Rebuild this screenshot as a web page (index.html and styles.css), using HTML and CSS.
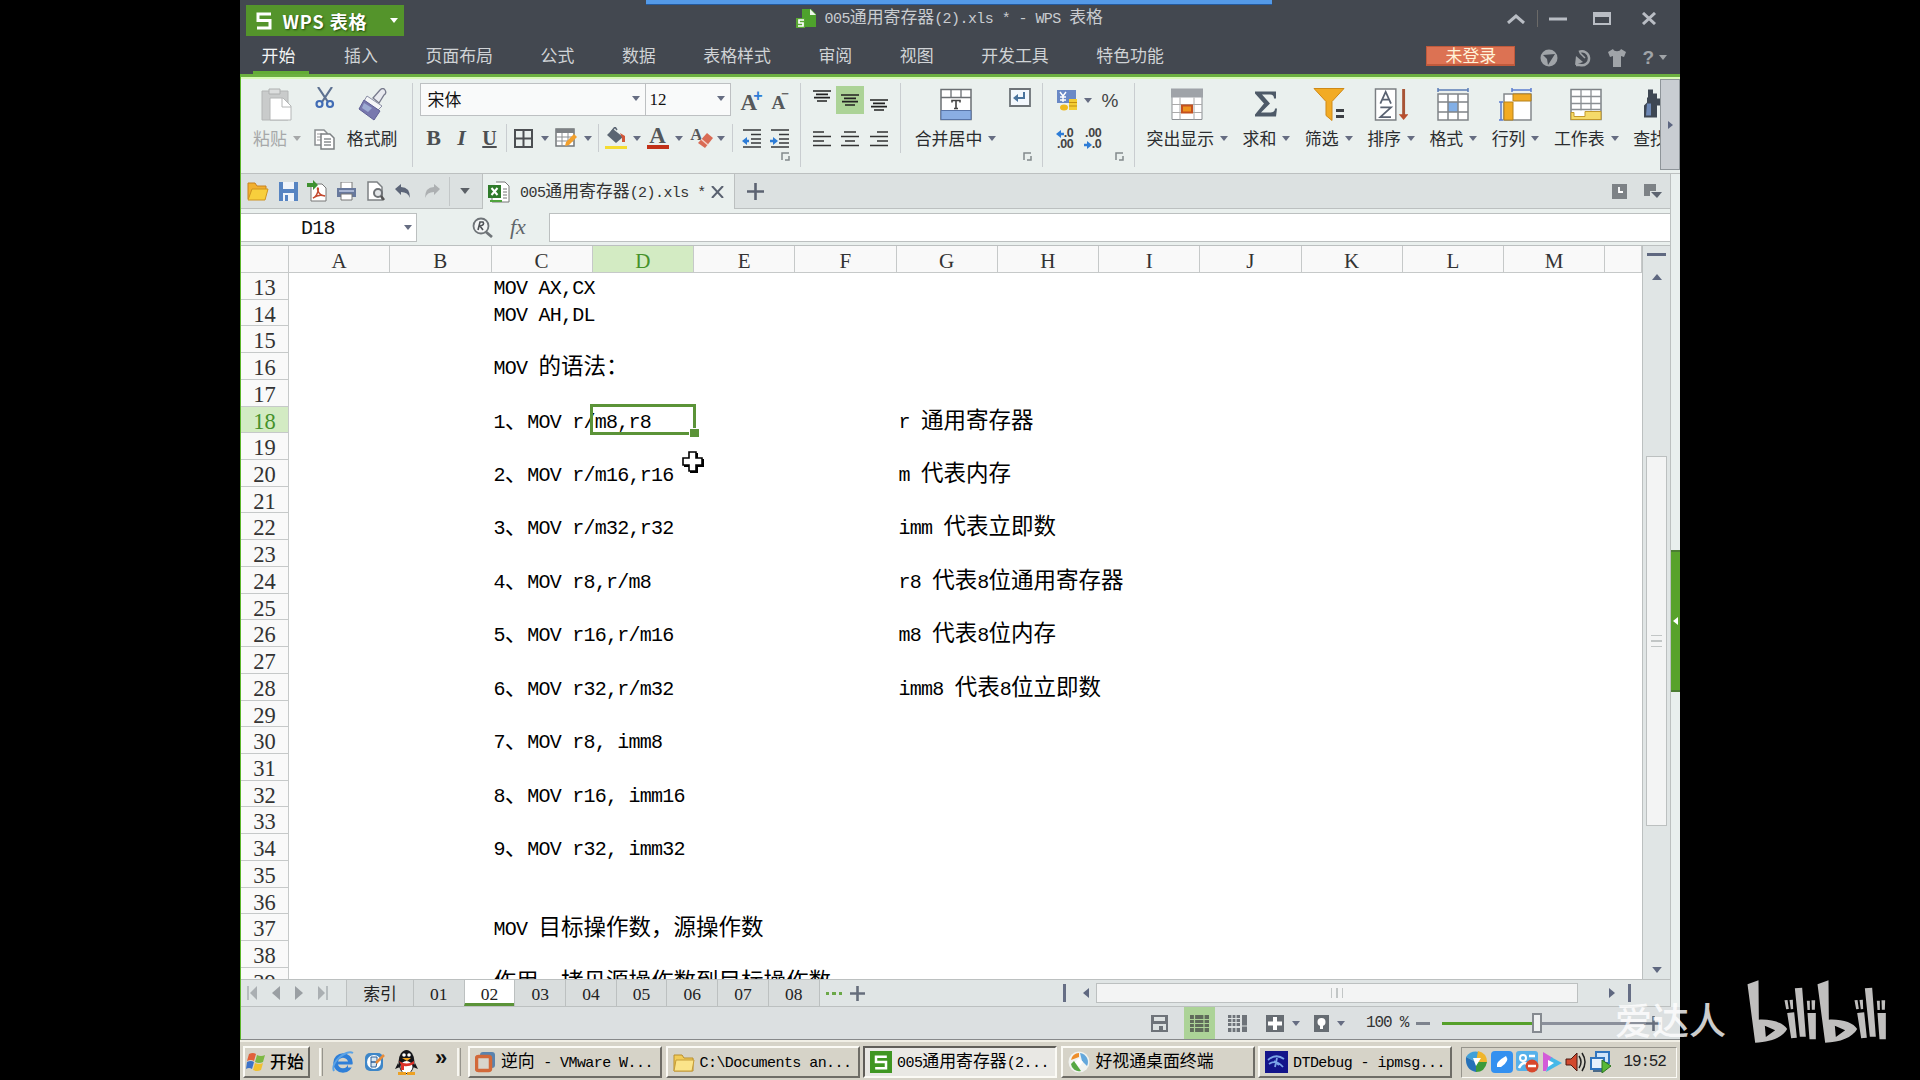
FILE: index.html
```html
<!DOCTYPE html>
<html lang="zh-CN">
<head>
<meta charset="utf-8">
<title>005通用寄存器(2).xls * - WPS 表格</title>
<link rel="stylesheet" href="styles.css">
</head>
<body>
<svg width="0" height="0" class="defs">
  <defs>
    <symbol id="arr" viewBox="0 0 8 5"><path d="M0 0h8L4 5z" fill="currentColor"/></symbol>
    <symbol id="launch" viewBox="0 0 9 9"><path d="M1 8V1h7" fill="none" stroke="#83898c" stroke-width="1.5"/><path d="M4 8h4V4" fill="none" stroke="#83898c" stroke-width="1.5"/></symbol>
    <symbol id="bili" viewBox="430 40 215 195"><path fill-rule="evenodd" d="M437 56 470 44 471 162C512 160 545 172 556 190 542 215 505 230 460 231ZM489 180 520 194 492 214ZM548 104l9-1 4 27-8 1zM563 103l10-1 1 28-7 1zM556 142l21-2 8 76-17 2zM579 68l22-2 11 147-18 0zM615 105h9v28h-7zM629 104h11l-1 28h-9zM617 142h25v79h-19z"/></symbol>
    <symbol id="wps" viewBox="0 0 16 18"><path d="M15 2H2v6.500h12V16H1" fill="none" stroke="currentColor" stroke-width="3"/></symbol>
  </defs>
</svg>
<div class="desktop">
  <div class="window">
    <header class="titlebar">
      <div class="wps-btn"><svg width="16" height="18"><use href="#wps"/></svg><span class="wps-name">WPS 表格</span><svg width="8" height="5"><use href="#arr"/></svg></div>
      <div class="doc-title">
        <svg width="21" height="20" viewBox="0 0 21 20"><path d="M6 0h9l5 5v13H6z" fill="#4ea22c"/><path d="M14 0l6 6h-6z" fill="#eef6ea"/><path d="M0 9h9v10H0z" fill="#5aa834"/><path d="M8 11H3v3h4v3H2" fill="none" stroke="#fff" stroke-width="1.700"/></svg>
        <span class="t">005<i>通用寄存器</i>(2).xls * - WPS <i>表格</i></span>
      </div>
      <div class="win-ctl">
        <svg width="18" height="10" viewBox="0 0 18 10"><path d="M1 9l8-7 8 7" fill="none" stroke="#b9bdc4" stroke-width="3"/></svg>
        <span class="vline"></span>
        <svg width="18" height="18" viewBox="0 0 18 18"><path d="M0 9h18" stroke="#b9bdc4" stroke-width="3"/></svg>
        <svg width="18" height="13" viewBox="0 0 18 13"><path d="M1 1h16v11H1zM1 4h16" fill="none" stroke="#b9bdc4" stroke-width="2"/><path d="M1 2h16" stroke="#b9bdc4" stroke-width="3"/></svg>
        <svg width="16" height="13" viewBox="0 0 16 13"><path d="M2 1l12 11M14 1L2 12" stroke="#b9bdc4" stroke-width="3"/></svg>
      </div>
    </header>
    <nav class="menu">
      <span class="tab active">开始</span><span class="tab">插入</span><span class="tab">页面布局</span><span class="tab">公式</span><span class="tab">数据</span><span class="tab">表格样式</span><span class="tab">审阅</span><span class="tab">视图</span><span class="tab">开发工具</span><span class="tab">特色功能</span>
      <div class="menu-right">
        <span class="login">未登录</span>
        <svg width="18" height="18" viewBox="0 0 18 18"><circle cx="9" cy="9" r="8.500" fill="#a0a4a8"/><path d="M3 6l12-1-7 11-1-6z" fill="#434850"/></svg>
        <svg width="18" height="18" viewBox="0 0 18 18"><path d="M5 3a7 7 0 1 1 1 13H2" fill="none" stroke="#a0a4a8" stroke-width="2.500"/><path d="M1 16l1-9 7 6z" fill="#a0a4a8"/><path d="M6 4l5 5" stroke="#a0a4a8" stroke-width="1.500"/></svg>
        <svg width="18" height="18" viewBox="0 0 18 18"><path d="M0 3l5-3c1 3 7 3 8 0l5 3-2 5-3-1v11H5V7L2 8z" fill="#a0a4a8"/></svg>
        <span class="help">?<svg width="8" height="5"><use href="#arr"/></svg></span>
      </div>
    </nav>

    <section class="ribbon">
      <div class="group clip">
        <div class="big paste"><svg width="31" height="33" viewBox="0 0 31 33"><path d="M1 3h26v29H1z" fill="#c9cbcb" stroke="#b4b6b6"/><path d="M8 1h11v5H8z" fill="#dcdede" stroke="#aeb0b0"/><path d="M9 10h13l8 8v14H9z" fill="#fff" stroke="#b4b6b6"/><path d="M21 10v9h9" fill="none" stroke="#b4b6b6"/></svg><span class="lbl">粘贴<svg width="8" height="5"><use href="#arr"/></svg></span></div>
        <div class="stack">
          <svg width="20" height="22" viewBox="0 0 20 22"><path d="M3 0l10 15M17 0L7 15" stroke="#5d7191" stroke-width="2.200"/><circle cx="4.500" cy="17" r="3" fill="none" stroke="#416cb5" stroke-width="2.200"/><circle cx="15" cy="17" r="3" fill="none" stroke="#416cb5" stroke-width="2.200"/></svg>
          <svg width="22" height="21" viewBox="0 0 22 21"><path d="M1 1h9l3 3v12H1z" fill="#fff" stroke="#8a8e91" stroke-width="1.500"/><path d="M3 5h5M3 8h4M3 11h4" stroke="#999"/><path d="M7 5h9l4 4v11H7z" fill="#fff" stroke="#7c8083" stroke-width="1.500"/><path d="M10 10h7M10 13h7M10 16h7" stroke="#8a8e91" stroke-width="1.300"/></svg>
        </div>
        <div class="big"><svg width="29" height="33" viewBox="0 0 29 33"><path d="M22 2q3-3 5 0t-1 5l-5 8-6-5z" fill="#e8eaef" stroke="#777a8c" stroke-width="1.300"/><path d="M9 8l15 10-4 4L6 13z" fill="#f5f6f8" stroke="#8b8fa5"/><path d="M6 12l16 11-6 9L1 21z" fill="#7878ae" stroke="#5f5f95"/><path d="M6 15l8 5-4 4-6-4z" fill="#9dabd3"/></svg><span class="lbl">格式刷</span></div>
      </div>
      <div class="group font">
        <div class="fontrow">
          <div class="box name">宋体<svg width="8" height="5"><use href="#arr"/></svg></div>
          <div class="box size"><span class="t">12</span><svg width="8" height="5"><use href="#arr"/></svg></div>
          <span class="sizer">A<sup class="plus">+</sup></span><span class="sizer small">A<sup>−</sup></span>
        </div>
        <div class="fmtrow">
          <b class="ser">B</b><b class="ser it">I</b><b class="ser un">U</b><span class="vs"></span>
          <svg width="19" height="19" viewBox="0 0 19 19"><path d="M1 1h17v17H1zM9.500 1v17M1 9.500h17" fill="none" stroke="#4c4f52" stroke-width="2"/></svg>
          <svg class="ar" width="8" height="5"><use href="#arr"/></svg>
          <svg width="22" height="20" viewBox="0 0 22 20"><path d="M1 1h18v17H1z" fill="#fff" stroke="#73777a" stroke-width="1.500"/><path d="M1 3h18" stroke="#7d8185" stroke-width="4"/><path d="M1 9h18M1 13h18M7 5v13M13 5v13" stroke="#8b8f92"/><path d="M10 18l1-4 8-8 3 3-8 8z" fill="#f2a02c"/></svg>
          <svg class="ar" width="8" height="5"><use href="#arr"/></svg><span class="vs"></span>
          <svg width="22" height="22" viewBox="0 0 22 22"><path d="M8 2l10 8-7 6-9-8z" fill="#5b6673"/><path d="M6 5l4-5 2 3" fill="none" stroke="#5b6673" stroke-width="1.500"/><path d="M15 6l5 3v6h-3v-4z" fill="#d15638"/><path d="M0 19h22v3H0z" fill="#f5dc31"/></svg>
          <svg class="ar" width="8" height="5"><use href="#arr"/></svg>
          <span class="acolor">A</span>
          <svg class="ar" width="8" height="5"><use href="#arr"/></svg>
          <span class="erase">A<svg width="16" height="16" viewBox="0 0 16 16"><path d="M10 0l6 5-8 10-7-5z" fill="#d96b55"/><path d="M4 6l7 6" stroke="#f3cfc5" stroke-width="1.500"/></svg></span>
          <svg class="ar" width="8" height="5"><use href="#arr"/></svg><span class="vs"></span>
          <svg width="19" height="19" viewBox="0 0 19 19"><path d="M1 1h18M9 5.500h10M9 10h10M9 14h10M1 18h18" stroke="#37393b" stroke-width="1.600"/><path d="M7 12H3" stroke="#2d7cd6" stroke-width="2.500"/><path d="M5 8v8l-5-4z" fill="#2d7cd6"/></svg>
          <svg width="19" height="19" viewBox="0 0 19 19"><path d="M1 1h18M9 5.500h10M9 10h10M9 14h10M1 18h18" stroke="#37393b" stroke-width="1.600"/><path d="M0 12h4" stroke="#2d7cd6" stroke-width="2.500"/><path d="M3 8v8l5-4z" fill="#2d7cd6"/></svg>
        </div>
        <svg class="la" width="9" height="9"><use href="#launch"/></svg>
      </div>
      <div class="group align">
        <svg class="up" width="18" height="12" viewBox="0 0 18 12"><path d="M0 1h18M3 4.300h12M1 7.600h16M4 11h10" stroke="#222" stroke-width="1.700"/></svg>
        <span class="on"><svg width="18" height="12" viewBox="0 0 18 12"><path d="M0 1h18M3 4.300h12M1 7.600h16M4 11h10" stroke="#222" stroke-width="1.700"/></svg></span>
        <svg class="dn" width="18" height="12" viewBox="0 0 18 12"><path d="M0 1h18M3 4.300h12M1 7.600h16M4 11h10" stroke="#222" stroke-width="1.700"/></svg>
        <svg width="18" height="16" viewBox="0 0 18 16"><path d="M0 1h11M0 5.500h18M0 10h11M0 14.500h18" stroke="#333" stroke-width="1.700"/></svg>
        <svg width="18" height="16" viewBox="0 0 18 16"><path d="M3 1h12M0 5.500h18M4 10h10M0 14.500h18" stroke="#333" stroke-width="1.700"/></svg>
        <svg width="18" height="16" viewBox="0 0 18 16"><path d="M7 1h11M0 5.500h18M7 10h11M0 14.500h18" stroke="#333" stroke-width="1.700"/></svg>
      </div>
      <div class="group merge">
        <div class="big"><svg width="32" height="32" viewBox="0 0 32 32"><path d="M1 1h30v30H1z" fill="#fff" stroke="#6b6f73" stroke-width="1.500"/><path d="M1 9h30M11 1v8M21 1v8" stroke="#6b6f73" stroke-width="1.300"/><path d="M1 22h30v9H1z" fill="#8aaee3" stroke="#5875a8"/><path d="M12 14v-2h8v2M16 12v8M14 20h4" fill="none" stroke="#444" stroke-width="1.600"/></svg><span class="lbl">合并居中<svg width="8" height="5"><use href="#arr"/></svg></span></div>
        <svg class="wrap" width="22" height="20" viewBox="0 0 22 20"><path d="M1 1h20v17H1z" fill="#f3f8fd" stroke="#6e7478" stroke-width="1.800"/><path d="M15 4v6H7" fill="none" stroke="#49739d" stroke-width="2"/><path d="M9 6v8l-5-4z" fill="#49739d"/></svg>
        <svg class="la" width="9" height="9"><use href="#launch"/></svg>
      </div>
      <div class="group num">
        <div class="numtop">
          <svg width="21" height="21" viewBox="0 0 21 21"><path d="M0 0h19v13H0z" fill="#6a89c6"/><path d="M3 2l3 4 3-4M6 6v6M3 7h6M3 10h6" stroke="#fff" fill="none" stroke-width="1.400"/><ellipse cx="7" cy="17.500" rx="4" ry="3" fill="#efb91e"/><path d="M12 9h8v11h-8z" fill="#f4cd34"/><path d="M12 12.500h8M12 16h8" stroke="#c38f10"/></svg>
          <svg class="ar" width="8" height="5"><use href="#arr"/></svg><span class="pct">%</span>
        </div>
        <div class="numbot">
          <span class="dec"><span class="dl"><svg width="8" height="8" viewBox="0 0 8 8"><path d="M4 4h4" stroke="#2d7cd6" stroke-width="2.500"/><path d="M5 0v8L0 4z" fill="#2d7cd6"/></svg>.0</span><span>.00</span></span>
          <span class="dec"><span>.00</span><span class="dl"><svg width="8" height="8" viewBox="0 0 8 8"><path d="M0 4h4" stroke="#2d7cd6" stroke-width="2.500"/><path d="M3 0v8l5-4z" fill="#2d7cd6"/></svg>.0</span></span>
        </div>
        <svg class="la" width="9" height="9"><use href="#launch"/></svg>
      </div>
      <div class="group tools">
        <div class="big"><svg width="32" height="32" viewBox="0 0 32 32"><path d="M1 1h30v30H1z" fill="#fff" stroke="#8b8f93"/><path d="M0 0h32v9H0z" fill="#9fa3a8"/><path d="M1 16h30M1 24h30M9 9v22M23 9v22" stroke="#aaa"/><path d="M11 17h10v7H11z" fill="#ee921f" stroke="#c4501f" stroke-width="2"/></svg><span class="lbl">突出显示<svg width="8" height="5"><use href="#arr"/></svg></span></div>
        <div class="big"><svg width="24" height="32" viewBox="0 0 24 32"><path d="M1 3h21v7h-2q0-4-4-4H8l8 9-9 9h9q5 0 5-4h2l-1 8H1v-2l9-11L1 5z" fill="#4e5a68"/></svg><span class="lbl">求和<svg width="8" height="5"><use href="#arr"/></svg></span></div>
        <div class="big"><svg width="32" height="32" viewBox="0 0 32 32"><path d="M1 0h30L19 13v19l-6-5V13z" fill="#f2ab24" stroke="#cf8916"/><path d="M23 22h8M23 28h8" stroke="#3d4044" stroke-width="3"/></svg><span class="lbl">筛选<svg width="8" height="5"><use href="#arr"/></svg></span></div>
        <div class="big"><svg width="34" height="34" viewBox="0 0 34 34"><path d="M1 1h21v32H1z" fill="#fff" stroke="#7b7f83" stroke-width="1.500"/><path d="M6 16l5.500-12L17 16M8 12h7M6 20h11L6 30h11" fill="none" stroke="#596271" stroke-width="1.800"/><path d="M30 1v27" stroke="#a85436" stroke-width="3"/><path d="M25 27h10l-5 6z" fill="#b94f2e"/></svg><span class="lbl">排序<svg width="8" height="5"><use href="#arr"/></svg></span></div>
        <div class="big"><svg width="32" height="33" viewBox="0 0 32 33"><path d="M1 0v4M31 0v4M1 2h30" stroke="#5b7cb6" stroke-width="1.500"/><path d="M1 6h30v26H1z" fill="#fff" stroke="#808488" stroke-width="1.500"/><path d="M11 14h10v10H11z" fill="#82afe6"/><path d="M1 14h30M1 24h30M11 6v26M21 6v26" stroke="#808488" stroke-width="1.500"/></svg><span class="lbl">格式<svg width="8" height="5"><use href="#arr"/></svg></span></div>
        <div class="big"><svg width="33" height="33" viewBox="0 0 33 33"><path d="M13 0v4M32 0v4M13 2h19M2 14v18M0 14h4M0 32h4" stroke="#5b7cd0" stroke-width="1.500"/><path d="M5 6h27v26H5z" fill="#fff" stroke="#84888c" stroke-width="1.500"/><path d="M14 6h18v7H14zM5 14h9v18H5z" fill="#f2ab24" stroke="#b5811d"/></svg><span class="lbl">行列<svg width="8" height="5"><use href="#arr"/></svg></span></div>
        <div class="big"><svg width="32" height="32" viewBox="0 0 32 32"><path d="M1 1h30v30H1z" fill="#fff" stroke="#7e8286" stroke-width="1.500"/><path d="M1 8h30M1 15h30M1 21h30M11 1v21M21 1v21" stroke="#8b8f93" stroke-width="1.300"/><path d="M1 24h3v4h11v-5h16v8H1z" fill="#f5da69" stroke="#c39a2d"/></svg><span class="lbl">工作表<svg width="8" height="5"><use href="#arr"/></svg></span></div>
        <div class="big find"><svg width="34" height="32" viewBox="0 0 34 32"><path d="M8 1h5v4h4v5h4V5h4V1h5v6l3 2v6l-3 2v12H22V17h-5v12H4V17l3-3V9h1z" fill="#3e4753"/><path d="M7 15h4v12H6z" fill="#6d88b5"/></svg><span class="lbl">查找<svg width="8" height="5"><use href="#arr"/></svg></span></div>
      </div>
      <div class="more"><svg width="5" height="8" viewBox="0 0 5 8"><path d="M0 0v8l5-4z" fill="#5c6580"/></svg></div>
    </section>

    <div class="main">
      <div class="workarea">
        <div class="quickbar">
          <div class="quick">
            <svg width="22" height="19" viewBox="0 0 22 19"><path d="M1 17V1h7l2 3h9v4" fill="#f2b02f" stroke="#c9811f"/><path d="M1 18L5 7h16l-3 11z" fill="#f8cf3c" stroke="#cf9420"/></svg>
            <svg width="19" height="19" viewBox="0 0 19 19"><path d="M0 0h19v19H0z" fill="#5784c2"/><path d="M4 0h11v7H4zM4 11h11v8H4z" fill="#f0f4fa"/><path d="M6 13h3v6H6z" fill="#5784c2"/></svg>
            <svg width="20" height="22" viewBox="0 0 20 22"><path d="M4 4h11l4 4v13H4z" fill="#fff" stroke="#777"/><path d="M6 18c4-1 6-9 5-10s-1 7 7 8c-5-2-8-1-12 2z" fill="none" stroke="#c44a31" stroke-width="1.500"/><path d="M0 3h6V0l5 5-5 5V7H0z" fill="#3f9130"/></svg>
            <svg width="19" height="19" viewBox="0 0 19 19"><path d="M4 0h11v7H4z" fill="#fff" stroke="#777"/><path d="M0 6h19v9H0z" fill="#68799d"/><path d="M2 9h15" stroke="#a9b6d3" stroke-width="2"/><path d="M4 12h11v6H4z" fill="#fff" stroke="#777"/></svg>
            <svg class="preview" width="18" height="20" viewBox="0 0 18 20"><path d="M1 1h9l5 5v13H1z" fill="#fff" stroke="#7d8184" stroke-width="1.500"/><circle cx="11" cy="12" r="4" fill="#e3e6e8" stroke="#6e7276" stroke-width="2"/><path d="M14 15l3 4" stroke="#555" stroke-width="2.500"/></svg>
            <svg width="15" height="14" viewBox="0 0 15 14"><path d="M0 5l6-5v3q9 0 9 11-2-6-9-6v3z" fill="#5c6578"/></svg>
            <svg class="redo" width="15" height="14" viewBox="0 0 15 14"><path d="M15 5L9 0v3Q0 3 0 14q2-6 9-6v3z" fill="#adb0b2"/></svg>
            <span class="qsep"></span>
            <svg width="10" height="6"><use href="#arr"/></svg>
          </div>
          <div class="doctab">
            <svg width="22" height="22" viewBox="0 0 22 22"><path d="M8 1h9l4 4v16H4v-4" fill="#fff" stroke="#777"/><path d="M15 8h4M15 11h4M15 14h4M15 17h4" stroke="#777"/><path d="M0 4h13v13H0z" fill="#2e7a2a"/><path d="M3.500 7l6 7M9.500 7l-6 7" stroke="#fff" stroke-width="2"/><path d="M2 20h12" stroke="#50a33d" stroke-width="2"/></svg>
            <span class="t">005<i>通用寄存器</i>(2).xls *</span>
            <svg width="13" height="12" viewBox="0 0 13 12"><path d="M1 0l11 12M12 0L1 12" stroke="#5a6270" stroke-width="2"/></svg>
          </div>
          <div class="newtab"><svg width="17" height="17" viewBox="0 0 17 17"><path d="M8.500 0v17M0 8.500h17" stroke="#5c6372" stroke-width="2.600"/></svg></div>
          <div class="tabtools">
            <svg width="15" height="15" viewBox="0 0 15 15"><path d="M0 0h15v15H0z" fill="#7d8286"/><path d="M7 3v5h4" fill="none" stroke="#fff" stroke-width="1.800"/></svg>
            <svg width="18" height="15" viewBox="0 0 18 15"><path d="M0 0h12v7H6v5H0z" fill="#7d8286"/><path d="M7 8h11l-5 6z" fill="#5d6470"/></svg>
          </div>
        </div>
        <div class="formula">
          <div class="namebox"><span class="cell">D18</span><svg width="8" height="5"><use href="#arr"/></svg></div>
          <svg class="mag" width="21" height="21" viewBox="0 0 21 21"><circle cx="9" cy="9" r="7.500" fill="#f3f5f5" stroke="#6f7478" stroke-width="1.800"/><path d="M14 15l6 5" stroke="#6f7478" stroke-width="2.800"/><path d="M6 13l2-8h3q2 3-3 4l3 4" fill="none" stroke="#4e5256" stroke-width="1.600"/></svg>
          <span class="fx">fx</span>
          <div class="input"></div>
        </div>
        <div class="sheetwrap">
          <div class="sheet">
            <div class="row head"><b></b><b>A</b><b>B</b><b>C</b><b class="sel">D</b><b>E</b><b>F</b><b>G</b><b>H</b><b>I</b><b>J</b><b>K</b><b>L</b><b>M</b><b></b></div>
            <div class="rows">
              <div class="row"><b>13</b><span class="c">MOV AX,CX</span></div>
              <div class="row"><b>14</b><span class="c">MOV AH,DL</span></div>
              <div class="row"><b>15</b></div>
              <div class="row"><b>16</b><span class="c">MOV <i>的语法：</i></span></div>
              <div class="row"><b>17</b></div>
              <div class="row"><b class="sel">18</b><span class="c">1<i>、</i>MOV r/m8,r8</span><span class="g">r <i>通用寄存器</i></span></div>
              <div class="row"><b>19</b></div>
              <div class="row"><b>20</b><span class="c">2<i>、</i>MOV r/m16,r16</span><span class="g">m <i>代表内存</i></span></div>
              <div class="row"><b>21</b></div>
              <div class="row"><b>22</b><span class="c">3<i>、</i>MOV r/m32,r32</span><span class="g">imm <i>代表立即数</i></span></div>
              <div class="row"><b>23</b></div>
              <div class="row"><b>24</b><span class="c">4<i>、</i>MOV r8,r/m8</span><span class="g">r8 <i>代表</i>8<i>位通用寄存器</i></span></div>
              <div class="row"><b>25</b></div>
              <div class="row"><b>26</b><span class="c">5<i>、</i>MOV r16,r/m16</span><span class="g">m8 <i>代表</i>8<i>位内存</i></span></div>
              <div class="row"><b>27</b></div>
              <div class="row"><b>28</b><span class="c">6<i>、</i>MOV r32,r/m32</span><span class="g">imm8 <i>代表</i>8<i>位立即数</i></span></div>
              <div class="row"><b>29</b></div>
              <div class="row"><b>30</b><span class="c">7<i>、</i>MOV r8, imm8</span></div>
              <div class="row"><b>31</b></div>
              <div class="row"><b>32</b><span class="c">8<i>、</i>MOV r16, imm16</span></div>
              <div class="row"><b>33</b></div>
              <div class="row"><b>34</b><span class="c">9<i>、</i>MOV r32, imm32</span></div>
              <div class="row"><b>35</b></div>
              <div class="row"><b>36</b></div>
              <div class="row"><b>37</b><span class="c">MOV <i>目标操作数，源操作数</i></span></div>
              <div class="row"><b>38</b></div>
              <div class="row"><b>39</b><span class="c"><i>作用，拷贝源操作数到目标操作数</i></span></div>
              <div class="selection"></div>
              <svg class="cursor" width="22" height="22" viewBox="0 0 22 22"><path d="M8 2h8v6h6v8h-6v6H8v-6H2V8h6z" fill="#000"/><path d="M7 1h7v6h6v7h-6v6H7v-6H1V7h6z" fill="#fff" stroke="#000" stroke-width="1.600"/></svg>
            </div>
          </div>
          <div class="vscroll">
            <span class="split"></span>
            <svg width="10" height="6" viewBox="0 0 10 6"><path d="M0 6l5-6 5 6z" fill="#5f6880"/></svg>
            <span class="vthumb"><s></s><s></s><s></s></span>
            <svg class="down" width="10" height="6"><use href="#arr"/></svg>
          </div>
        </div>
        <div class="sheettabs">
          <div class="navs">
            <svg width="11" height="14" viewBox="0 0 11 14"><path d="M1 0v14" stroke="#aaafb2" stroke-width="1.500"/><path d="M10 0v14L3 7z" fill="#aaafb2"/></svg>
            <svg width="8" height="14" viewBox="0 0 8 14"><path d="M8 0v14L0 7z" fill="#9a9fa3"/></svg>
            <svg width="8" height="14" viewBox="0 0 8 14"><path d="M0 0v14l8-7z" fill="#9a9fa3"/></svg>
            <svg width="11" height="14" viewBox="0 0 11 14"><path d="M10 0v14" stroke="#aaafb2" stroke-width="1.500"/><path d="M1 0v14l7-7z" fill="#aaafb2"/></svg>
          </div>
          <span class="st wide"><i>索引</i></span><span class="st">01</span><span class="st cur">02</span><span class="st">03</span><span class="st">04</span><span class="st">05</span><span class="st">06</span><span class="st">07</span><span class="st">08</span>
          <span class="dots"><s></s><s></s><s></s></span>
          <svg width="15" height="15" viewBox="0 0 15 15"><path d="M7.500 0v15M0 7.500h15" stroke="#666e7c" stroke-width="2.600"/></svg>
          <div class="hscroll">
            <span class="bar"></span>
            <svg width="6" height="10" viewBox="0 0 6 10"><path d="M6 0v10L0 5z" fill="#5f6880"/></svg>
            <span class="hthumb"><s></s><s></s><s></s></span>
            <svg width="6" height="10" viewBox="0 0 6 10"><path d="M0 0v10l6-5z" fill="#5f6880"/></svg>
            <span class="bar"></span>
          </div>
        </div>
      </div>
      <div class="side"><div class="sidetab"><svg width="5" height="8" viewBox="0 0 5 8"><path d="M5 0v8L0 4z" fill="#fff"/></svg></div></div>
    </div>

    <footer class="status">
      <svg width="17" height="17" viewBox="0 0 17 17"><path d="M0 0h17v17H0z" fill="#6e7379"/><path d="M3 2h11v4H3zM2 9h13v6h-3v-4H8v4H2z" fill="#dce1e1"/></svg>
      <span class="view on"><svg width="19" height="17" viewBox="0 0 19 17"><path d="M0 0h19v17H0z" fill="#5f6b5a"/><path d="M0 4.500h19M0 8.500h19M0 12.500h19M4.500 0v17M14 0v17" stroke="#acd397" stroke-width="1.200"/></svg></span>
      <svg class="view2" width="19" height="17" viewBox="0 0 19 17"><path d="M0 0h12v11H0zM14 0h5v17h-5zM0 13h12v4H0z" fill="#6e7379"/><path d="M4 0v17M8 0v17M0 3.500h12M0 7.500h12M14 11h5" stroke="#dce1e1" stroke-width="1.200"/></svg>
      <svg class="read" width="18" height="17" viewBox="0 0 18 17"><path d="M0 0h18v17H0z" fill="#676d73"/><path d="M9 2v13M2 8.500h14" stroke="#fff" stroke-width="4"/></svg>
      <svg class="ar" width="8" height="5"><use href="#arr"/></svg>
      <svg class="bulb" width="15" height="17" viewBox="0 0 15 17"><path d="M0 0h15v17H0z" fill="#676d73"/><circle cx="7.500" cy="7" r="4" fill="#fff"/><path d="M6 10h3v4H6z" fill="#fff"/></svg>
      <svg class="ar" width="8" height="5"><use href="#arr"/></svg>
      <span class="t zoomtxt">100 %</span>
      <svg class="zminus" width="14" height="3" viewBox="0 0 14 3"><path d="M0 0h14v3H0z" fill="#7d838d"/></svg>
      <span class="track done"></span><span class="knob"></span><span class="track"></span>
      <svg width="15" height="15" viewBox="0 0 15 15"><path d="M7.500 0v15M0 7.500h15" stroke="#666e7c" stroke-width="2.600"/></svg>
    </footer>
  </div>

  <div class="taskbar">
    <div class="tb start"><svg width="21" height="21" viewBox="0 0 21 21"><path d="M3 3q4-2 7 0L8 10Q5 8 1 10z" fill="#e1603a"/><path d="M11 4q4 2 8 0l-2 7q-4 2-8 0z" fill="#7eb843"/><path d="M1 11q4-2 7 0l-2 7q-3-2-6 0z" fill="#3c72c8"/><path d="M9 12q4 2 8 0l-2 7q-4 2-8 0z" fill="#f0c030"/></svg><span>开始</span></div>
    <span class="grip"></span>
    <div class="launchers">
      <svg width="23" height="23" viewBox="0 0 23 23"><circle cx="11" cy="12" r="7.500" fill="none" stroke="#2f7fd8" stroke-width="4.500"/><path d="M5 12h13" stroke="#2f7fd8" stroke-width="3"/><path d="M2 20C-2 12 14-2 21 2" fill="none" stroke="#5ba3e6" stroke-width="2"/><path d="M16 15h6" stroke="#d6d3c8" stroke-width="3"/></svg>
      <svg width="22" height="22" viewBox="0 0 22 22"><rect x="1" y="2" width="18" height="18" rx="5" fill="#3d86c8"/><circle cx="10" cy="11" r="7" fill="#fff"/><path d="M7 6h6v5H7zM7 11h6l-1 5H7z" fill="#d7e8f5" stroke="#2b5c95"/><path d="M12 12l8-8" stroke="#e88b38" stroke-width="2.500"/></svg>
      <svg width="23" height="26" viewBox="0 0 23 26"><ellipse cx="11.500" cy="13" rx="8" ry="12" fill="#15161a"/><path d="M3 14l-3 6 5-2zM20 14l3 6-5-2z" fill="#15161a"/><ellipse cx="11.500" cy="18" rx="6" ry="6" fill="#fff"/><circle cx="9" cy="6" r="1.800" fill="#fff"/><circle cx="14" cy="6" r="1.800" fill="#fff"/><path d="M7 9h9l-4 3z" fill="#f3a520"/><path d="M4 12q8 5 15 0v3q-6 3-10 2v4H6v-5z" fill="#dc3228"/><path d="M3 23h8v3H3zM12 23h8v3h-8z" fill="#eda124"/></svg>
      <span class="chev">»</span>
    </div>
    <span class="grip second"></span>
    <div class="tb task"><svg width="21" height="23" viewBox="0 0 21 23"><rect x="5" y="1" width="15" height="16" rx="3" fill="#5a83ae"/><rect x="1.500" y="5.500" width="14" height="14" rx="2" fill="#d8d5cc" stroke="#d2693a" stroke-width="3.500"/></svg><span class="t"><i>逆向</i> - VMware W...</span></div>
    <div class="tb task"><svg width="22" height="21" viewBox="0 0 22 21"><path d="M1 3h8l2 3h9v13H1z" fill="#f2cc58" stroke="#b98e2c"/><path d="M3 8h18l-2 11H1z" fill="#fbe48a" stroke="#c59c38"/></svg><span class="t">C:\Documents an...</span></div>
    <div class="tb task down-state"><span class="sicon"><svg width="16" height="15"><use href="#wps"/></svg></span><span class="t">005<i>通用寄存器</i>(2...</span></div>
    <div class="tb task"><svg width="23" height="22" viewBox="0 0 23 22"><circle cx="11" cy="11" r="10.500" fill="#f1f3f0"/><path d="M3 13a8 8 0 0 0 10 7L6 10z" fill="#56a843"/><path d="M3 9a8 8 0 0 1 8-7v4z" fill="#ee8e2c"/><path d="M12 2a9 9 0 0 1 7 13l-5-5z" fill="#64a8dc"/><path d="M11 7l4 4-4 5-4-5z" fill="#fff"/></svg><span class="t"><i>好视通桌面终端</i></span></div>
    <div class="tb task"><svg width="23" height="22" viewBox="0 0 23 22"><path d="M0 0h23v22H0z" fill="#13148a"/><path d="M3 9q8-7 16-1M4 13q7-5 14 3M9 10l5 4M12 7l-2 9" stroke="#7ba4e8" fill="none" stroke-width="1.800"/></svg><span class="t">DTDebug - ipmsg...</span></div>
    <div class="tray">
      <svg width="23" height="22" viewBox="0 0 23 22"><path d="M11 11L1 6Q6-1 14 1z" fill="#40a0d8"/><path d="M11 11L13 0q9 2 9 11z" fill="#f0b52c"/><path d="M11 11h11q-2 10-11 10z" fill="#3b9a3a"/><path d="M11 11v10Q0 19 1 6z" fill="#2671b8"/><path d="M8 7h8l-5 8z" fill="#fff"/></svg>
      <svg width="22" height="22" viewBox="0 0 22 22"><rect width="22" height="22" rx="4" fill="#3390f0"/><path d="M6 16q-2-5 9-11 4 5-5 11z" fill="#fff"/></svg>
      <svg width="23" height="22" viewBox="0 0 23 22"><rect width="22" height="20" rx="3" fill="#56b1ea"/><circle cx="7" cy="7" r="3" fill="none" stroke="#fff" stroke-width="2"/><path d="M3 17q4-8 9-3M13 5h6" stroke="#fff" stroke-width="2.500" fill="none"/><circle cx="16" cy="15" r="6.500" fill="#d8482d"/><path d="M12 15h8" stroke="#fff" stroke-width="2.500"/></svg>
      <svg width="20" height="20" viewBox="0 0 20 20"><path d="M1 0l10 6-7 13H1z" fill="#d35bd8"/><path d="M9 5l11 6L4 20z" fill="#46b8e8"/><path d="M6 8l6 3-6 4z" fill="#fff"/></svg>
      <svg width="22" height="20" viewBox="0 0 22 20"><path d="M1 7h5l6-6v18l-6-6H1z" fill="#d2492e" stroke="#4a1b12"/><path d="M14 4q4 6 0 12M17 1q6 9 0 18" stroke="#222" stroke-width="1.500" fill="none"/></svg>
      <svg width="22" height="22" viewBox="0 0 22 22"><path d="M6 1h13v11H6z" fill="#cfe4fa" stroke="#2f74be" stroke-width="2"/><path d="M1 7h13v11H1z" fill="#e7f1fc" stroke="#2f74be" stroke-width="2"/><path d="M3 20h9" stroke="#4c6a88" stroke-width="2"/><path d="M12 9l9 6-9 7z" fill="#58b838" stroke="#2d7420"/></svg>
      <span class="t">19:52</span>
    </div>
  </div>
</div>
<div class="topstrip"></div>
<div class="watermark"><span>爱达人</span><svg width="72" height="65"><use href="#bili"/></svg><svg width="72" height="65"><use href="#bili"/></svg></div>
</body>
</html>
```
FILE: styles.css
```css
* { box-sizing: border-box; }
body { margin: 0; width: 1920px; height: 1080px; overflow: hidden; background: #000; font: 16.9px/20px "Noto Sans CJK SC", sans-serif; color: #222; }
.defs { position: absolute; }
svg { display: block; flex: none; }
i { font-style: normal; }
.desktop { width: 1440px; height: 1080px; margin: 0 auto; overflow: hidden; }
.window { height: 1040px; display: flex; flex-direction: column; border-left: 1.500px solid #5bb52a; background: #dce1e1; }

/* half-width text sits on an 8.44px pitch, Chinese on 16.88px */
.t { font-family: "Liberation Mono", monospace; font-size: 15px; letter-spacing: -.563px; white-space: pre; padding-top: 3px; }
.t i { font: 16.875px/0 "Noto Sans CJK SC", sans-serif; letter-spacing: 0; }

.titlebar { height: 37px; flex: none; background: #434850; margin-left: -1.500px; display: flex; align-items: center; }
.wps-btn { width: 158px; height: 31px; margin: 5px 0 0 6px; padding: 0 6px 0 10px; background: #54942b; color: #fff; display: flex; align-items: center; align-self: flex-start; }
.wps-name { margin: 0 auto 0 11px; font: bold 18px/30px "Noto Sans CJK SC", sans-serif; text-shadow: 1px 1px 2px #234a0c; white-space: nowrap; letter-spacing: .9px; }
.doc-title { margin-left: 392px; display: flex; align-items: center; gap: 8px; color: #c9ccd0; }
.win-ctl { margin-left: auto; margin-right: 23px; display: flex; align-items: center; }
.win-ctl .vline { width: 1px; height: 17px; background: #6b6a68; margin: 0 11px 0 12px; }
.win-ctl svg + svg { margin-left: 26px; }
.win-ctl svg:last-child { margin-left: 30px; }

.menu { height: 37px; flex: none; margin-left: -1.500px; padding-left: 13px; background: #434850; color: #d0d3d6; display: flex; }
.tab { padding: 0 11px 0 9px; margin-right: 27.600px; line-height: 36px; height: 38px; }
.tab.active { width: 56px; margin-right: 26.500px; border-bottom: 4px solid #63ad35; color: #f2f4f5; }
.menu-right { margin-left: auto; margin-right: 13px; display: flex; align-items: center; gap: 16px; padding-top: 4px; }
.login { width: 89px; height: 20px; margin: -3px 9px 0 0; background: #dc7253; border: 1px solid #c05a3c; border-bottom-width: 2px; line-height: 15px; text-align: center; color: #fff3d8; }
.help { display: flex; align-items: center; gap: 5px; font: bold 19px/18px "Liberation Sans", sans-serif; color: #a0a4a8; }

.ribbon { height: 100px; flex: none; border-top: 3px solid #6cb040; border-bottom: 1.500px solid #bcc0c0; background: #eaf0ee; box-shadow: inset 0 2px #d9fbb8; display: flex; color: #555e6e; }
.group { position: relative; flex: none; display: flex; height: 84px; margin-top: 6px; border-right: 1.500px solid #c9cdd0; }
.lbl { display: flex; align-items: center; gap: 6px; color: #2a2c2e; white-space: nowrap; line-height: 20px; height: 20px; }
.lbl svg, .ar, .box svg { color: #666d82; }
.big { display: flex; flex-direction: column; align-items: center; flex: none; }
.big > svg { height: 33px; margin: 5px 0 7px; }
.clip { width: 171.500px; padding-left: 12px; }
.paste .lbl, .paste .lbl svg { color: #a6a8a9; }
.stack { display: flex; flex-direction: column; align-items: center; gap: 20px; padding-top: 4px; margin: 0 11px 0 13px; }
.font { width: 388px; padding-left: 7px; flex-direction: column; }
.fontrow { display: flex; height: 33px; }
.box { height: 33px; background: #f9fafa; border: 1.500px solid #bdc0c2; display: flex; align-items: center; justify-content: space-between; padding: 0 5px 2px 7px; color: #111; }
.box.name { width: 225px; border-right: 0; }
.box.size { width: 86px; padding-left: 4px; }
.box .t { font: 17px/20px "Liberation Serif", serif; letter-spacing: 0; }
.sizer { margin-left: 10px; width: 21px; font: bold 23px/39px "Liberation Serif", serif; color: #55585b; white-space: nowrap; }
.sizer sup { font: bold 13px/0 "Liberation Sans", sans-serif; color: #666; vertical-align: 11px; margin-left: -4px; }
.sizer .plus { color: #2d7cd6; font-size: 16px; vertical-align: 9px; }
.sizer.small { font-size: 19px; }
.fmtrow { display: grid; grid-template-columns: 28px 28px 28px 6px 28px 14px 29px 14px 8px 27px 14px 28px 14px 28px 14px 10px 27px 29px; height: 28px; margin-top: 8px; align-items: center; justify-items: center; }
.ser { font: bold 22px/22px "Liberation Serif", serif; color: #4c4f52; }
.it { font-style: italic; }
.un { text-decoration: underline; font-size: 20px; }
.vs { width: 1.500px; height: 28px; background: #c9cdd0; }
.acolor { width: 22px; height: 22px; text-align: center; font: bold 23px/18px "Liberation Serif", serif; color: #55585b; border-bottom: 4px solid #c23118; }
.erase { display: flex; font: bold 17px/14px "Liberation Serif", serif; color: #55585b; }
.erase svg { margin: 5px -4px 0 -6px; }
.la { position: absolute; right: 10px; bottom: 6px; }
.align { width: 100px; height: 70px; padding: 3px 7px 0 7px; display: grid; grid-template-columns: repeat(3, 28.500px); grid-template-rows: 28px 39px; align-items: center; justify-items: center; }
.align .up { margin-top: -8px; }
.align .dn { margin-top: 10px; }
.align > svg:nth-child(n+4) { margin-top: 10px; }
.on { background: #acd397; width: 28px; height: 28px; display: grid; place-items: center; }
.merge { width: 142px; padding-left: 14px; }
.merge .big { width: 82px; }
.wrap { margin: 5px 0 0 12px; }
.num { width: 92px; flex-direction: column; padding-left: 14px; }
.numtop { display: flex; align-items: center; height: 28px; gap: 6px; padding-top: 3px; margin-top: 2px; }
.pct { font: 19px/22px "Liberation Sans", sans-serif; margin-left: 4px; color: #444; }
.numbot { display: flex; gap: 11px; margin-top: 15px; }
.dec { width: 17px; font: bold 12.500px/11px "Liberation Sans", sans-serif; color: #444; display: flex; flex-direction: column; align-items: flex-end; letter-spacing: -.3px; }
.dl { display: flex; align-items: center; }
.tools { flex: 1; min-width: 0; overflow: hidden; border: 0; padding-left: 12px; gap: 14.500px; color: #555e6e; }
.more { width: 20px; height: 91px; margin-top: 2px; flex: none; background: #c9cdd2; border: 1px solid #8e9499; display: grid; place-items: center; }

.main { flex: none; height: 833px; display: flex; }
.workarea { width: 1430px; display: flex; flex-direction: column; border-right: 1.500px solid #bcc0c0; }
.side { flex: 1; background: #e9efee; padding-top: 376px; }
.sidetab { height: 142px; background: #58a22b; border: solid #4c7d33; border-width: 2px 0; display: grid; place-items: center; }
.quickbar { height: 35px; flex: none; display: flex; border-bottom: 1.500px solid #bcc0c0; }
.quick { width: 241px; padding-left: 6px; display: flex; align-items: center; gap: 9.600px; color: #5b6066; }
.preview { margin-left: 2px; }
.redo { margin-left: 5px; }
.qsep { width: 1px; height: 29px; background: #c3c7c8; }
.doctab { width: 252.500px; height: 36px; border: solid #bcc0c0; border-width: 0 1.500px; background: #eaf0ee; display: flex; align-items: center; padding: 0 10px 0 5px; color: #333; }
.doctab .t { margin: 0 auto 0 10px; }
.newtab { width: 42px; display: grid; place-items: center; }
.tabtools { margin-left: auto; margin-right: 8px; display: flex; gap: 17px; align-items: center; }
.formula { height: 37px; flex: none; background: #eaf0ee; display: flex; align-items: center; border-bottom: 1.500px solid #bcc0c0; }
.namebox { width: 176px; height: 29px; border: 1.500px solid #bcc0c0; border-left: 0; background: #fff; display: flex; align-items: center; padding: 0 4px 0 60px; justify-content: space-between; color: #666d82; }
.namebox .cell { color: #111; padding-top: 3px; }
.cell, .row { font-family: "Liberation Mono", monospace; font-size: 20px; letter-spacing: -.752px; }
.mag { margin-left: 55px; }
.fx { width: 39px; margin-left: 17px; font: italic 22px/24px "Liberation Serif", serif; color: #60656a; }
.input { flex: 1; height: 29px; background: #fff; border: 1.500px solid #bcc0c0; border-right: 0; }

.sheetwrap { height: 733px; flex: none; display: flex; }
.sheet { width: 1402px; border-right: 1.500px solid #bcc0c0; background: #fff; overflow: hidden; display: flex; flex-direction: column; }
.row { display: grid; grid-template-columns: 48px repeat(13, 101.250px) 1fr; grid-template-rows: 26.720px; height: 26.720px; flex: none; line-height: 32px; white-space: pre; color: #000; }
.row b { grid-row: 1; font: 22.500px/30px "Liberation Serif", serif; letter-spacing: 0; text-align: center; color: #333; background: #f9f9f9; border: solid #c6c9c9; border-width: 0 1.500px 1.500px 0; }
.row b.sel { background: #d3ebc3; color: #45912a; }
.row .c, .row .g { grid-row: 1; grid-column: 4 / span 4; padding-left: 2px; width: 0; }
.row .g { grid-column: 8 / span 4; }
.row i { font: 22.500px/0 "Noto Sans CJK SC", sans-serif; letter-spacing: 0; }
.row.head { height: 27px; grid-template-rows: 27px; }
.head b { font-size: 21px; }
.rows { position: relative; flex: 1; overflow: hidden; }
.selection { position: absolute; left: 349px; top: 131px; width: 106px; height: 31px; border: 3.500px solid #5b9338; }
.selection::after { content: ""; position: absolute; right: -6px; bottom: -5px; width: 9px; height: 8px; background: #5b9338; border: solid #fff; border-width: 1px 0 0 1px; }
.cursor { position: absolute; left: 441px; top: 178px; }
.vscroll { flex: 1; background: #e0e5e5; display: flex; flex-direction: column; align-items: center; }
.split { width: 19px; height: 3px; margin: 7px 0 18px; background: #5f6880; }
.vthumb { width: 21px; height: 370px; margin-top: 176px; border: 1.500px solid #bcc0c0; background: #f3f4f4; display: flex; flex-direction: column; align-items: center; justify-content: center; gap: 4px; }
.vthumb s { width: 11px; height: 1.500px; background: #c2c6c6; }
.down { margin-top: auto; margin-bottom: 6px; color: #5f6880; }

.sheettabs { height: 28px; flex: none; border: solid #bcc0c0; border-width: 1px 0; background: #e0e5e5; display: flex; align-items: center; }
.navs { width: 105px; display: flex; justify-content: space-between; padding: 0 18px 0 6px; }
.st { width: 50.700px; height: 26px; flex: none; border-left: 1.500px solid #bcc0c0; background: #d9dddd; text-align: center; font: 17.500px/28px "Liberation Serif", serif; color: #222; }
.st.wide { width: 67px; }
.st i { font: 16.875px/0 "Noto Sans CJK SC", sans-serif; }
.st.cur { background: #fff; border-bottom: 3px solid #5b9338; }
.dots { display: flex; gap: 3px; margin: 0 8px 0 0; padding-left: 6px; border-left: 1.500px solid #bcc0c0; height: 26px; align-items: center; }
.dots s { width: 3.500px; height: 3px; background: #6ba848; }
.hscroll { margin-left: auto; width: 607px; height: 26px; display: flex; align-items: center; padding-right: 39px; }
.bar { width: 3px; height: 18px; background: #666e85; }
.hscroll .bar + svg { margin-left: 17px; }
.hthumb { flex: 1; height: 20px; margin: 0 31px 0 7px; border: 1.500px solid #bcc0c0; background: #f3f4f4; display: flex; align-items: center; justify-content: center; gap: 4px; }
.hthumb s { width: 1.500px; height: 10px; background: #c2c6c6; }
.hscroll svg + .bar { margin-left: 13px; }

.status { flex: 1; display: flex; align-items: center; padding-left: 910px; background: #dce0e1; border-bottom: 1.500px solid #87898a; color: #6e7379; }
.view.on { width: 31px; height: 32px; margin: 0 13px 0 16px; }
.read { margin: 0 8px 0 19px; }
.bulb { margin: 0 8px 0 14px; }
.zoomtxt { margin: 0 8px 0 21px; color: #333; font-size: 16px; letter-spacing: -1.160px; padding-top: 0; }
.track { width: 104px; height: 3px; background: #8b909b; }
.track.done { width: 90px; margin-left: 12px; background: #55a02a; }
.knob { width: 10px; height: 20px; border: 2px solid #858a90; background: #eef0f1; }

.taskbar { height: 40px; background: #d6d3c8; border-top: 2px solid #f1efe6; display: flex; align-items: center; padding: 2px 3px 0 3px; }
.tb { height: 32px; flex: none; border: 2px solid; border-color: #fbfaf5 #6e6c66 #6e6c66 #fbfaf5; display: flex; align-items: center; gap: 4px; padding-left: 5px; color: #000; overflow: hidden; }
.start { width: 67px; padding: 0 0 2px 1px; gap: 3px; font-weight: 500; white-space: nowrap; }
.task { width: 194px; margin-right: 3.500px; gap: 5px; }
.task .t { padding-top: 3px; }
.down-state { border-color: #5f5d58 #fbfaf5 #fbfaf5 #5f5d58; background: #e9e8e4; }
.sicon { width: 22px; height: 22px; background: #3f9622; color: #fff; display: grid; place-items: center; flex: none; }
.grip { width: 4px; height: 28px; margin: 0 9px; border-left: 2px solid #f7f6f0; border-right: 1.500px solid #96948c; flex: none; }
.launchers { width: 119px; display: flex; align-items: center; gap: 9px; flex: none; }
.launchers .chev { margin-left: 8px; font: bold 22px/22px "Liberation Sans", sans-serif; color: #111; padding-bottom: 8px; }
.grip.second { margin: 0 7px 0 6px; }
.tray { flex: 1; height: 31px; margin-left: 5px; border: 1.500px solid; border-color: #96948c #fbfaf5 #fbfaf5 #96948c; display: flex; align-items: center; gap: 3px; padding-left: 3px; }
.tray .t { margin-left: 9px; font-size: 16px; letter-spacing: -1.160px; padding: 0; }

.topstrip { position: absolute; left: 646px; top: 0; width: 626px; height: 5px; background: #549ae8; border-bottom: 1px solid #245a9e; }
.watermark { position: absolute; left: 1615px; top: 979px; display: flex; align-items: flex-start; color: #fff; fill: #c0bfbe; font: 500 37px/80px "Noto Sans CJK SC", sans-serif; }
.watermark span { width: 130px; opacity: .8; }
.watermark svg { margin-right: -1.700px; }
```
